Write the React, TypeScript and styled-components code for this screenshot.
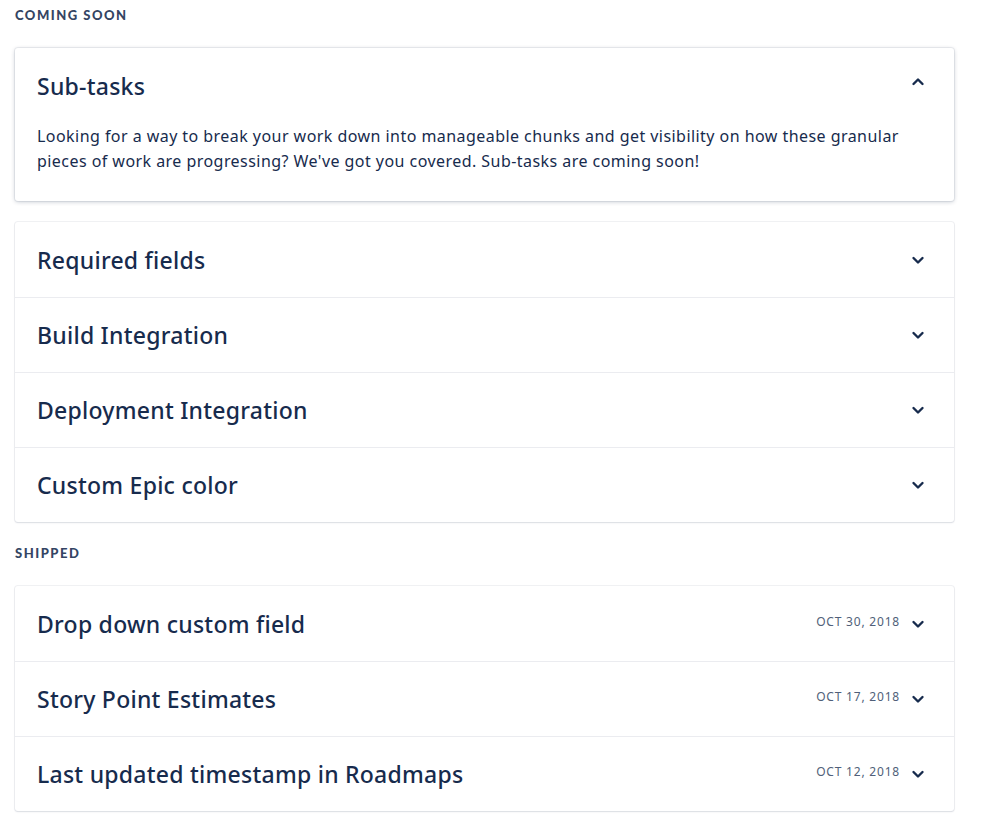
import styled, { createGlobalStyle } from 'styled-components';

const GlobalStyle = createGlobalStyle`
  body {
    margin: 0;
    background: #fff;
    font-family: "Noto Sans", Lato, sans-serif;
    color: #172b4d;
  }
`;

const Page = styled.div`
  padding: 6px 0 0 15px;
  width: 939px;
`;

const SectionLabel = styled.h4<{ gap: number }>`
  margin: 0 0 ${(props) => props.gap}px;
  font-family: Lato, "Noto Sans", sans-serif;
  font-size: 13px;
  font-weight: 900;
  letter-spacing: 1.5px;
  text-transform: uppercase;
  color: #344563;
  line-height: 18px;
`;

const Group = styled.div<{ open?: boolean }>`
  background: #fff;
  border-radius: 3px;
  margin-bottom: ${(props) => (props.open ? 21 : 22)}px;
  box-shadow: ${(props) =>
    props.open
      ? '0 1px 4px rgba(9, 30, 66, 0.22), 0 0 0 1px rgba(9, 30, 66, 0.06)'
      : '0 1px 2px rgba(9, 30, 66, 0.1), 0 0 0 1px rgba(9, 30, 66, 0.06)'};
`;

const Row = styled.div`
  height: 75px;
  box-sizing: border-box;
  border-top: 1px solid #ebecf0;
  &:first-child {
    border-top: none;
  }
`;

const Header = styled.div<{ open?: boolean }>`
  display: flex;
  align-items: center;
  height: ${(props) => (props.open ? '75px' : '100%')};
  padding: 0 24px 0 22px;
  box-sizing: border-box;
`;

const Title = styled.span`
  flex: 1;
  font-size: 23px;
  font-weight: 500;
  color: #172b4d;
  letter-spacing: 0.25px;
`;

const DateText = styled.span`
  font-size: 12px;
  letter-spacing: 0.8px;
  color: #505f79;
  margin-right: 6px;
  margin-top: -5px;
`;

const Chevron = styled.svg<{ up?: boolean }>`
  width: 24px;
  height: 24px;
  transform: ${(props) => (props.up ? 'rotate(180deg)' : 'none')};
  margin-top: ${(props) => (props.up ? -8 : 0)}px;
`;

const Body = styled.p`
  margin: 0;
  padding: 1px 22px 27px;
  font-size: 16px;
  line-height: 25px;
  letter-spacing: 0.45px;
  color: #172b4d;
`;

interface Item {
  title: string;
  date?: string;
}

const soon: Item[] = [
  { title: 'Required fields' },
  { title: 'Build Integration' },
  { title: 'Deployment Integration' },
  { title: 'Custom Epic color' },
];

const shipped: Item[] = [
  { title: 'Drop down custom field', date: 'OCT 30, 2018' },
  { title: 'Story Point Estimates', date: 'OCT 17, 2018' },
  { title: 'Last updated timestamp in Roadmaps', date: 'OCT 12, 2018' },
];

function Arrow({ up }: { up?: boolean }) {
  return (
    <Chevron up={up} viewBox="0 0 24 24">
      <path
        d="M7.5 10l4.5 4.5 4.5-4.5"
        fill="none"
        stroke="#172b4d"
        strokeWidth="2.4"
        strokeLinecap="round"
        strokeLinejoin="round"
      />
    </Chevron>
  );
}

function App() {
  return (
    <Page>
      <GlobalStyle />
      <SectionLabel gap={24}>Coming soon</SectionLabel>
      <Group open>
        <Header open>
          <Title>Sub-tasks</Title>
          <Arrow up />
        </Header>
        <Body>
          Looking for a way to break your work down into manageable chunks and get visibility on how these granular
          pieces of work are progressing? We've got you covered. Sub-tasks are coming soon!
        </Body>
      </Group>
      <Group>
        {soon.map((item) => (
          <Row key={item.title}>
            <Header>
              <Title>{item.title}</Title>
              <Arrow />
            </Header>
          </Row>
        ))}
      </Group>
      <SectionLabel gap={24}>Shipped</SectionLabel>
      <Group>
        {shipped.map((item) => (
          <Row key={item.title}>
            <Header>
              <Title>{item.title}</Title>
              <DateText>{item.date}</DateText>
              <Arrow />
            </Header>
          </Row>
        ))}
      </Group>
    </Page>
  );
}

export default App;
